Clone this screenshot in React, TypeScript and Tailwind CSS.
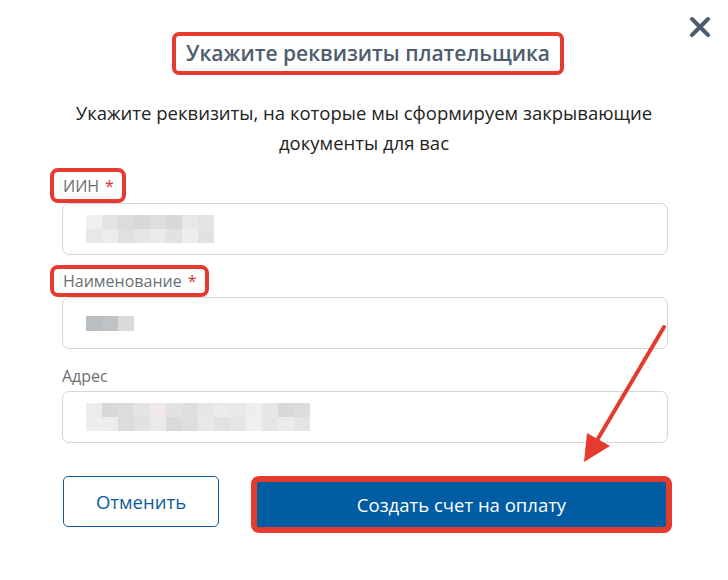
import React from "react";

const RED = "border-[#e53b2f]";

type Block = string;

function Pixels({ rows, cell }: { rows: Block[][]; cell: string }) {
  return (
    <div className="flex flex-col">
      {rows.map((r, i) => (
        <div key={i} className="flex">
          {r.map((c, j) => (
            <div key={j} className={`${cell} ${c}`} />
          ))}
        </div>
      ))}
    </div>
  );
}

const iinRows: Block[][] = [
  ["bg-[#f0f0f0]", "bg-[#e4e4e4]", "bg-[#dcdcdc]", "bg-[#d8d8d8]", "bg-[#dedede]", "bg-[#d6d9dc]", "bg-[#e8e8e8]", "bg-[#e4e4e4]"],
  ["bg-[#e8e8e8]", "bg-[#ececec]", "bg-[#e0e0e0]", "bg-[#e6e6e6]", "bg-[#eaeaea]", "bg-[#e2e2e2]", "bg-[#ededed]", "bg-[#e2e2e2]"],
];
const nameRows: Block[][] = [["bg-[#b9bec3]", "bg-[#c0c2c6]", "bg-[#dadada]"]];
const addrRows: Block[][] = [
  ["bg-[#ececec]", "bg-[#d6d8da]", "bg-[#dcdcdc]", "bg-[#e4e4e4]", "bg-[#f2e8e8]", "bg-[#e2e2e2]", "bg-[#dedede]", "bg-[#e6e6e6]", "bg-[#ebebeb]", "bg-[#e8e8e8]", "bg-[#eeeeee]", "bg-[#e6e6e6]", "bg-[#d8d8d8]", "bg-[#dcdcdc]"],
  ["bg-[#eeeeee]", "bg-[#ececec]", "bg-[#dcdcdc]", "bg-[#e2e2e2]", "bg-[#eaeaea]", "bg-[#dadada]", "bg-[#dcdfe2]", "bg-[#e8e8e8]", "bg-[#e2e2e2]", "bg-[#e6e6e6]", "bg-[#efefef]", "bg-[#e6e6e6]", "bg-[#ebebeb]", "bg-[#e4e4e4]"],
];

function Field({
  label,
  required,
  boxed,
  labelH,
  children,
}: {
  label: string;
  required?: boolean;
  boxed?: boolean;
  labelH: string;
  children: React.ReactNode;
}) {
  return (
    <div className="flex flex-col">
      {boxed ? (
        <div className={`-ml-[12px] w-fit ${labelH} border-[4px] ${RED} rounded-[8px] pl-[9px] pr-[8px] flex items-center text-[16px] text-[#6b6f73]`}>
          <span>{label}</span>
          {required && <span className="ml-[6px] text-[#d6332b]">*</span>}
        </div>
      ) : (
        <div className={`${labelH} flex items-end pb-[3px] text-[16px] text-[#6b6f73]`}>{label}</div>
      )}
      <div className="h-[52px] border border-[#d3d6da] rounded-[7px] bg-white flex items-center pl-[23px]">
        {children}
      </div>
    </div>
  );
}

export default function App() {
  return (
    <div className="relative w-[728px] h-[580px] bg-white overflow-hidden font-['Open_Sans',sans-serif]">
      <button className="absolute right-[17px] top-[16px] w-[22px] h-[22px] flex items-center justify-center">
        <svg width="22" height="22" viewBox="0 0 22 22">
          <path d="M3 3 L19 19 M19 3 L3 19" stroke="#4b5d6f" strokeWidth="4" strokeLinecap="round" />
        </svg>
      </button>

      <div className="flex flex-col pt-[32px]">
        <div className="flex justify-center pl-[8px]">
          <div className={`h-[43px] border-[4px] ${RED} rounded-[7px] px-[10px] flex items-center text-[21px] font-semibold text-[#4e5e6e]`}>
            Укажите реквизиты плательщика
          </div>
        </div>

        <p className="mt-[23px] mx-auto w-[620px] text-center text-[18.5px] leading-[30px] text-[#222222]">
          Укажите реквизиты, на которые мы сформируем закрывающие документы для вас
        </p>

        <div className="mt-[10px] pl-[62px] pr-[60px] flex flex-col gap-[10px]">
          <Field label="ИИН" required boxed labelH="h-[35px]">
            <Pixels rows={iinRows} cell="w-[16px] h-[14px]" />
          </Field>
          <Field label="Наименование" required boxed labelH="h-[32px]">
            <Pixels rows={nameRows} cell="w-[16px] h-[15px]" />
          </Field>
          <Field label="Адрес" labelH="h-[32px]">
            <Pixels rows={addrRows} cell="w-[16px] h-[14px]" />
          </Field>
        </div>

        <div className="mt-[33px] pl-[63px] flex items-start">
          <button className="w-[156px] h-[51px] border border-[#0b5c9e] rounded-[5px] text-[18.5px] text-[#0b5c9e]">
            Отменить
          </button>
          <div className={`ml-[32px] w-[421px] h-[57px] border-[6px] ${RED} rounded-[8px] bg-[#e53b2f]`}>
            <button className="w-full h-full bg-[#005ca3] rounded-[2px] text-[18.5px] text-white">
              Создать счет на оплату
            </button>
          </div>
        </div>
      </div>

      <svg className="absolute inset-0 pointer-events-none" width="728" height="580" viewBox="0 0 728 580">
        <line x1="664" y1="327" x2="596" y2="442" stroke="#e53b2f" strokeWidth="4" strokeLinecap="round" />
        <polygon points="584,462 587,433 610,446" fill="#e53b2f" />
      </svg>
    </div>
  );
}
